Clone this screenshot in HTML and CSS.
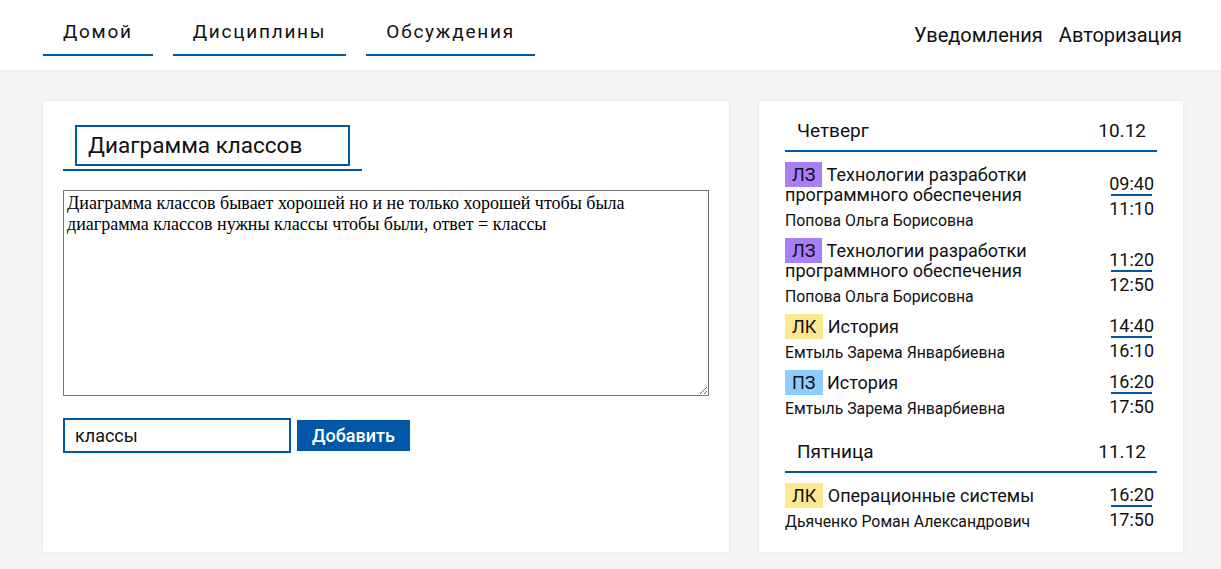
FILE: index.html
```html
<!DOCTYPE html>
<html lang="ru">
<head>
<meta charset="utf-8">
<title>Диаграмма классов</title>
<link rel="stylesheet" href="styles.css">
</head>
<body>
<header class="topbar">
  <nav class="nav-left">
    <a class="nav-link" href="#">Домой</a>
    <a class="nav-link" href="#">Дисциплины</a>
    <a class="nav-link" href="#">Обсуждения</a>
  </nav>
  <nav class="nav-right">
    <a class="nav-plain" href="#">Уведомления</a>
    <a class="nav-plain" href="#">Авторизация</a>
  </nav>
</header>
<main class="page">
  <section class="card editor">
    <div class="title-wrap">
      <div class="title-box">Диаграмма классов</div>
    </div>
    <textarea class="answer">Диаграмма классов бывает хорошей но и не только хорошей чтобы была диаграмма классов нужны классы чтобы были, ответ = классы</textarea>
    <div class="add-row">
      <input class="tag-input" type="text" value="классы">
      <button class="add-btn" type="button">Добавить</button>
    </div>
  </section>
  <aside class="card schedule">
    <div class="day">
      <div class="day-head"><span>Четверг</span><span>10.12</span></div>
      <div class="lesson">
        <div class="lesson-info">
          <div class="subject"><span class="badge lz">ЛЗ</span> Технологии разработки программного обеспечения</div>
          <div class="teacher">Попова Ольга Борисовна</div>
        </div>
        <div class="times"><div class="t-start">09:40</div><div class="t-sep"></div><div class="t-end">11:10</div></div>
      </div>
      <div class="lesson">
        <div class="lesson-info">
          <div class="subject"><span class="badge lz">ЛЗ</span> Технологии разработки программного обеспечения</div>
          <div class="teacher">Попова Ольга Борисовна</div>
        </div>
        <div class="times"><div class="t-start">11:20</div><div class="t-sep"></div><div class="t-end">12:50</div></div>
      </div>
      <div class="lesson">
        <div class="lesson-info">
          <div class="subject"><span class="badge lk">ЛК</span> История</div>
          <div class="teacher">Емтыль Зарема Январбиевна</div>
        </div>
        <div class="times"><div class="t-start">14:40</div><div class="t-sep"></div><div class="t-end">16:10</div></div>
      </div>
      <div class="lesson">
        <div class="lesson-info">
          <div class="subject"><span class="badge pz">ПЗ</span> История</div>
          <div class="teacher">Емтыль Зарема Январбиевна</div>
        </div>
        <div class="times"><div class="t-start">16:20</div><div class="t-sep"></div><div class="t-end">17:50</div></div>
      </div>
    </div>
    <div class="day">
      <div class="day-head"><span>Пятница</span><span>11.12</span></div>
      <div class="lesson">
        <div class="lesson-info">
          <div class="subject"><span class="badge lk">ЛК</span> Операционные системы</div>
          <div class="teacher">Дьяченко Роман Александрович</div>
        </div>
        <div class="times"><div class="t-start">16:20</div><div class="t-sep"></div><div class="t-end">17:50</div></div>
      </div>
    </div>
  </aside>
</main>
</body>
</html>
```
FILE: styles.css
```css
* { box-sizing: border-box; }
html, body { margin: 0; padding: 0; }
body {
  background: #f5f5f5;
  font-family: Roboto, "Noto Sans", sans-serif;
  color: #111;
  height: 569px;
  overflow: hidden;
}
a { color: inherit; text-decoration: none; }

.topbar {
  height: 70px;
  background: #fff;
  display: flex;
  justify-content: space-between;
  padding: 0 39px 0 43px;
  box-shadow: 0 1px 4px rgba(0,0,0,0.06);
  position: relative;
}
.nav-left { display: flex; gap: 20px; }
.nav-link {
  font-size: 19px;
  letter-spacing: 1.75px;
  padding: 20px 20px 0;
  height: 56px;
  line-height: 24px;
  border-bottom: 2px solid #0058a6;
}
.nav-right { display: flex; gap: 16px; padding-top: 23px; }
.nav-plain { font-size: 20px; line-height: 24px; }

.page {
  display: flex;
  align-items: flex-start;
  gap: 30px;
  padding: 31px 0 0 43px;
}
.card {
  background: #fff;
  box-shadow: 0 0 6px rgba(0,0,0,0.05);
  height: 451px;
}
.editor { width: 686px; padding: 24px 20px; }
.title-wrap {
  display: inline-block;
  width: 299px;
  padding: 0 12px 3px;
  border-bottom: 2px solid #0058a6;
}
.title-box {
  height: 41px;
  border: 2px solid #0058a6;
  padding: 0 11px;
  font-size: 22.5px;
  line-height: 37px;
}
.answer {
  display: block;
  margin-top: 19px;
  width: 646px;
  height: 206px;
  border: 1px solid #767676;
  padding: 2px 3px;
  font-family: "Liberation Serif", serif;
  font-size: 18px;
  line-height: normal;
  color: #000;
  resize: vertical;
}
.add-row { display: flex; align-items: center; margin-top: 22px; gap: 6px; }
.tag-input {
  width: 228px;
  height: 35px;
  border: 2px solid #0058a6;
  padding: 0 10px;
  font-family: Roboto, sans-serif;
  font-size: 18px;
  color: #111;
  outline: none;
}
.add-btn {
  width: 113px;
  height: 31px;
  border: 0;
  background: #0058a6;
  color: #fff;
  font-family: Roboto, sans-serif;
  font-weight: 500;
  font-size: 18px;
  padding: 0;
}

.schedule { width: 424px; padding: 13px 26px; }
.day + .day { margin-top: 16px; }
.day-head {
  display: flex;
  justify-content: space-between;
  padding: 5px 11px 7px 12px;
  font-size: 19px;
  line-height: 24px;
  border-bottom: 2px solid #0058a6;
  margin-bottom: 13px;
}
.lesson {
  display: flex;
  justify-content: space-between;
  align-items: center;
  margin-bottom: 10px;
}
.lesson-info { flex: 1; }
.subject { font-size: 18px; line-height: 20px; }
.badge { padding: 2px 7px; }
.lz { background: #a87ff7; }
.lk { background: #fde88f; }
.pz { background: #8ecbff; }
.teacher { font-size: 15.8px; line-height: 20px; margin-top: 6px; }
.times { font-size: 18px; text-align: right; padding-right: 3px; margin: -1px 0; }
.t-start { line-height: 20px; }
.t-end { line-height: 26px; }
.t-sep { height: 2px; background: #0058a6; margin: 0 2px; }
```
